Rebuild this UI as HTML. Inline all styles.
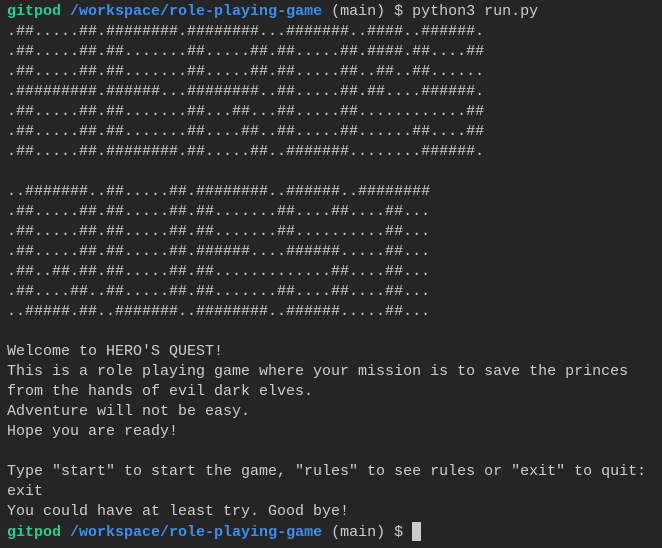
<!DOCTYPE html>
<html><head><meta charset="utf-8"><style>
html,body{margin:0;padding:0;background:#252526;width:662px;height:548px;overflow:hidden}
pre{margin:0;padding:2px 0 0 7px;font-family:"Liberation Mono",monospace;font-size:15px;line-height:20px;color:#cccccc;white-space:pre}
.g{color:#23d18b;font-weight:bold}.b{color:#3b8eea;font-weight:bold}
.c{display:inline-block;width:9px;height:19px;background:#cccccc;vertical-align:-5px}
</style></head><body><pre><span class="g">gitpod</span> <span class="b">/workspace/role-playing-game</span> (main) $ python3 run.py
.##.....##.########.########...#######..####..######.
.##.....##.##.......##.....##.##.....##.####.##....##
.##.....##.##.......##.....##.##.....##..##..##......
.#########.######...########..##.....##.##....######.
.##.....##.##.......##...##...##.....##............##
.##.....##.##.......##....##..##.....##......##....##
.##.....##.########.##.....##..#######........######.

..#######..##.....##.########..######..########
.##.....##.##.....##.##.......##....##....##...
.##.....##.##.....##.##.......##..........##...
.##.....##.##.....##.######....######.....##...
.##..##.##.##.....##.##.............##....##...
.##....##..##.....##.##.......##....##....##...
..#####.##..#######..########..######.....##...

Welcome to HERO'S QUEST!
This is a role playing game where your mission is to save the princes
from the hands of evil dark elves.
Adventure will not be easy.
Hope you are ready!

Type "start" to start the game, "rules" to see rules or "exit" to quit:
exit
You could have at least try. Good bye!
<span class="g">gitpod</span> <span class="b">/workspace/role-playing-game</span> (main) $ <span class="c"></span></pre></body></html>
